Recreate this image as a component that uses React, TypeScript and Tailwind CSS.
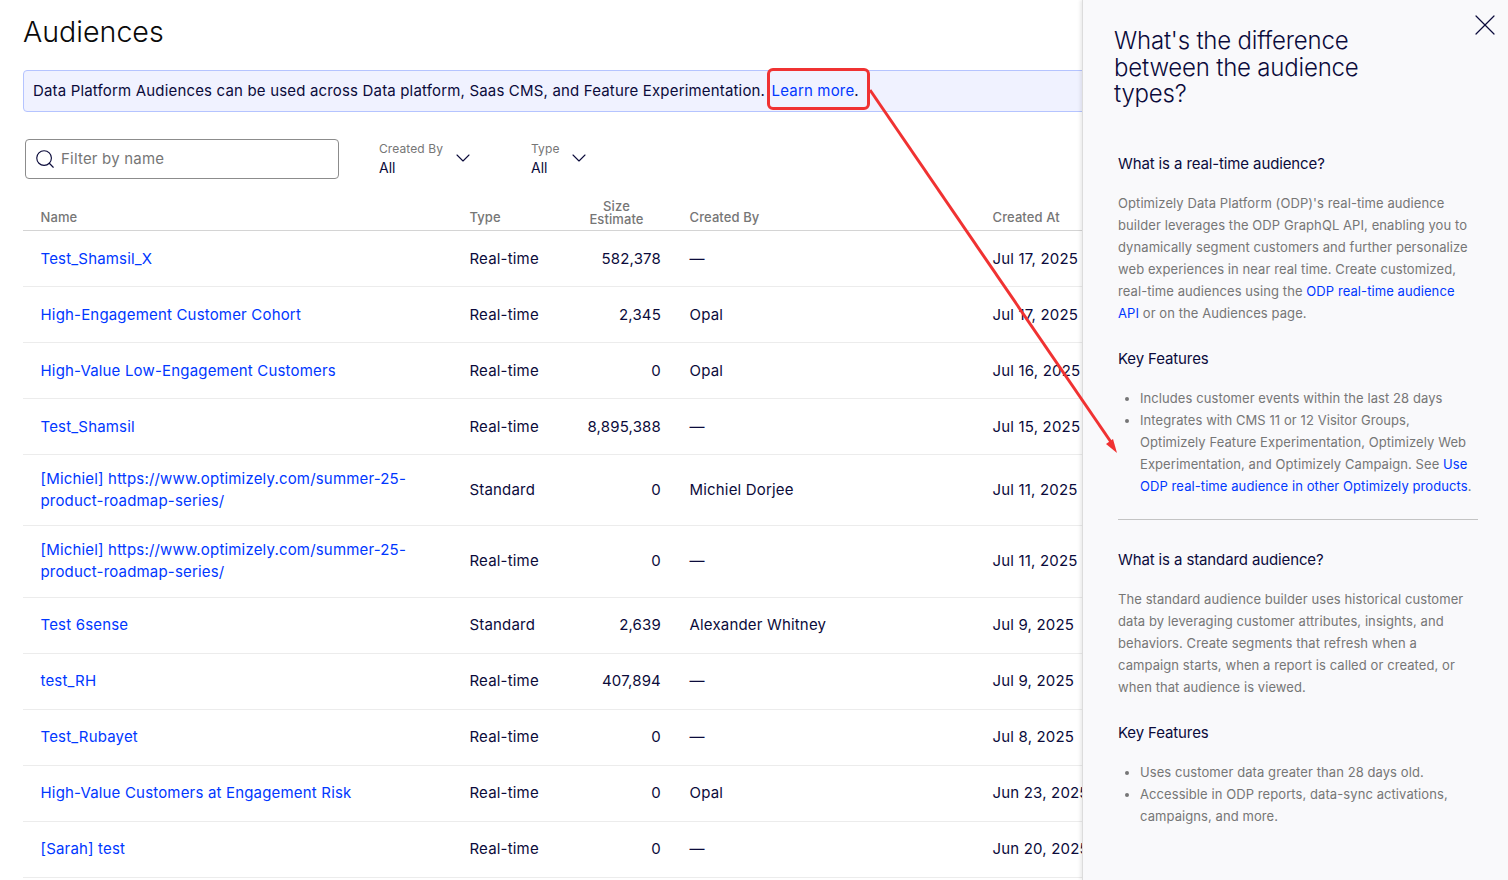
import React from 'react';
import { Search, ChevronDown, X } from 'lucide-react';

const rows = [
  { name: 'Test_Shamsil_X', type: 'Real-time', size: '582,378', by: '—', at: 'Jul 17, 2025' },
  { name: 'High-Engagement Customer Cohort', type: 'Real-time', size: '2,345', by: 'Opal', at: 'Jul 17, 2025' },
  { name: 'High-Value Low-Engagement Customers', type: 'Real-time', size: '0', by: 'Opal', at: 'Jul 16, 2025' },
  { name: 'Test_Shamsil', type: 'Real-time', size: '8,895,388', by: '—', at: 'Jul 15, 2025' },
  { name: '[Michiel] https://www.optimizely.com/summer-25-product-roadmap-series/', type: 'Standard', size: '0', by: 'Michiel Dorjee', at: 'Jul 11, 2025', tall: true },
  { name: '[Michiel] https://www.optimizely.com/summer-25-product-roadmap-series/', type: 'Real-time', size: '0', by: '—', at: 'Jul 11, 2025', tall: true },
  { name: 'Test 6sense', type: 'Standard', size: '2,639', by: 'Alexander Whitney', at: 'Jul 9, 2025' },
  { name: 'test_RH', type: 'Real-time', size: '407,894', by: '—', at: 'Jul 9, 2025' },
  { name: 'Test_Rubayet', type: 'Real-time', size: '0', by: '—', at: 'Jul 8, 2025' },
  { name: 'High-Value Customers at Engagement Risk', type: 'Real-time', size: '0', by: 'Opal', at: 'Jun 23, 2025' },
  { name: '[Sarah] test', type: 'Real-time', size: '0', by: '—', at: 'Jun 20, 2025' },
];

const FilterSelect = ({ label, width }: { label: string; width: string }) => (
  <div className={`flex items-center ${width}`}>
    <div className="flex-1 -mt-[3px]">
      <div className="text-[12px] leading-[19px] tracking-[0.1px] text-[#767676]">{label}</div>
      <div className="text-[14px] leading-[19px] text-[#0b0b3b]">All</div>
    </div>
    <ChevronDown className="w-[24px] h-[24px] -mr-[4px] -mt-[2px] text-[#0b0b3b]" strokeWidth={1.1} />
  </div>
);

const Link = ({ children }: { children: React.ReactNode }) => (
  <a className="text-[#0037ff]">{children}</a>
);

const Panel = () => (
  <aside className="absolute top-0 right-0 bottom-0 w-[426px] bg-[#f9f9fb] border-l border-[#dcdcdc] shadow-[-2px_0_3px_rgba(0,0,0,0.08)] pl-[31px] pr-[30px] pt-[28px]">
    <button className="absolute top-[7px] right-[5px] text-[#0b0b3b]">
      <X className="w-[36px] h-[36px]" strokeWidth={0.8} />
    </button>
    <h2 className="text-[24px] leading-[26.5px] tracking-[-0.2px] font-light text-[#0b0b3b] w-[260px]">What's the difference between the audience types?</h2>
    <div className="pl-[4px] pt-[45px]">
      <h3 className="text-[15px] leading-[22px] tracking-[-0.12px] text-[#0b0b3b]">What is a real-time audience?</h3>
      <p className="mt-[17px] text-[13px] leading-[22px] tracking-[0.08px] text-[#767676]">
        Optimizely Data Platform (ODP)'s real-time audience builder leverages the ODP GraphQL API, enabling you to dynamically segment customers and further personalize web experiences in near real time. Create customized, real-time audiences using the <Link>ODP real-time audience API</Link> or on the Audiences page.
      </p>
      <h3 className="mt-[24px] text-[15px] leading-[22px] tracking-[-0.12px] text-[#0b0b3b]">Key Features</h3>
      <ul className="mt-[17px] pl-[22px] list-disc text-[13px] leading-[22px] tracking-[0.08px] text-[#767676]">
        <li>Includes customer events within the last 28 days</li>
        <li>Integrates with CMS 11 or 12 Visitor Groups, Optimizely Feature Experimentation, Optimizely Web Experimentation, and Optimizely Campaign. See <Link>Use ODP real-time audience in other Optimizely products</Link>.</li>
      </ul>
      <hr className="mt-[22px] border-[#c4c4c4]" />
      <h3 className="mt-[29px] text-[15px] leading-[22px] tracking-[-0.12px] text-[#0b0b3b]">What is a standard audience?</h3>
      <p className="mt-[17px] text-[13px] leading-[22px] tracking-[0.08px] text-[#767676]">
        The standard audience builder uses historical customer data by leveraging customer attributes, insights, and behaviors. Create segments that refresh when a campaign starts, when a report is called or created, or when that audience is viewed.
      </p>
      <h3 className="mt-[24px] text-[15px] leading-[22px] tracking-[-0.12px] text-[#0b0b3b]">Key Features</h3>
      <ul className="mt-[17px] pl-[22px] list-disc text-[13px] leading-[22px] tracking-[0.08px] text-[#767676]">
        <li>Uses customer data greater than 28 days old.</li>
        <li>Accessible in ODP reports, data-sync activations, campaigns, and more.</li>
      </ul>
    </div>
  </aside>
);

export default function App() {
  return (
    <div className="relative h-[880px] w-[1508px] overflow-hidden bg-white font-['Inter',sans-serif] text-[#0b0b3b]">
      <main className="pl-[23px] pt-[12px] w-[1140px]">
        <h1 className="text-[28.6px] leading-[40px] font-light text-[#0a0a0a]">Audiences</h1>
        <div className="mt-[18px] h-[42px] flex items-center pl-[9px] bg-[#f0f2ff] border border-[#b5c4ff] rounded-[4px] text-[15px] tracking-[0.17px]">
          <span>Data Platform Audiences can be used across Data platform, Saas CMS, and Feature Experimentation.</span>
          <span className="ml-[6.5px]"><Link>Learn more</Link>.</span>
        </div>

        <div className="mt-[27px] flex items-center">
          <div className="ml-[2px] w-[314px] h-[40px] border border-[#8c8c8c] rounded-[4px] flex items-center pl-[8px]">
            <Search className="w-[22px] h-[22px] text-[#0b0b3b]" strokeWidth={1.25} />
            <span className="ml-[5px] text-[15px] tracking-[0.2px] text-[#767676]">Filter by name</span>
          </div>
          <div className="ml-[40px]"><FilterSelect label="Created By" width="w-[92px]" /></div>
          <div className="ml-[60px]"><FilterSelect label="Type" width="w-[56px]" /></div>
        </div>

        <div className="mt-[20px] flex items-end h-[32px] pb-[4px] pl-[17.5px] border-b border-[#d4d4d4] text-[13px] leading-[13px] tracking-[0.1px] text-[#767676] font-medium">
          <div className="w-[429px] pb-[2px]">Name</div>
          <div className="w-[90px] pb-[2px]">Type</div>
          <div className="w-[114px] text-center">Size<br />Estimate</div>
          <div className="w-[319px] pl-[16px] pb-[2px]">Created By</div>
          <div className="pb-[2px]">Created At</div>
        </div>

        {rows.map((r, i) => (
          <div key={i} className={`flex items-center pl-[17.5px] border-b border-[#ececec] text-[15px] leading-[22px] tracking-[0.18px] ${r.tall ? 'h-[71.25px]' : 'h-[56px]'}`}>
            <div className="w-[429px] pr-[50px]"><Link>{r.name}</Link></div>
            <div className="w-[90px]">{r.type}</div>
            <div className="w-[101.5px] text-right">{r.size}</div>
            <div className="w-[331.5px] pl-[28.5px]">{r.by}</div>
            <div>{r.at}</div>
          </div>
        ))}
      </main>

      <Panel />

      {/* callout drawn on top of the screenshot */}
      <div className="absolute left-[767px] top-[68px] w-[103px] h-[42px] border-[3px] border-[#f03232] rounded-[6px]" />
      <svg className="absolute inset-0 pointer-events-none" width="1508" height="880" viewBox="0 0 1508 880">
        <line x1="870" y1="90" x2="1113" y2="445" stroke="#f03232" strokeWidth="3" />
        <polygon points="1117,453 1106,444 1113,439" fill="#f03232" />
      </svg>
    </div>
  );
}
